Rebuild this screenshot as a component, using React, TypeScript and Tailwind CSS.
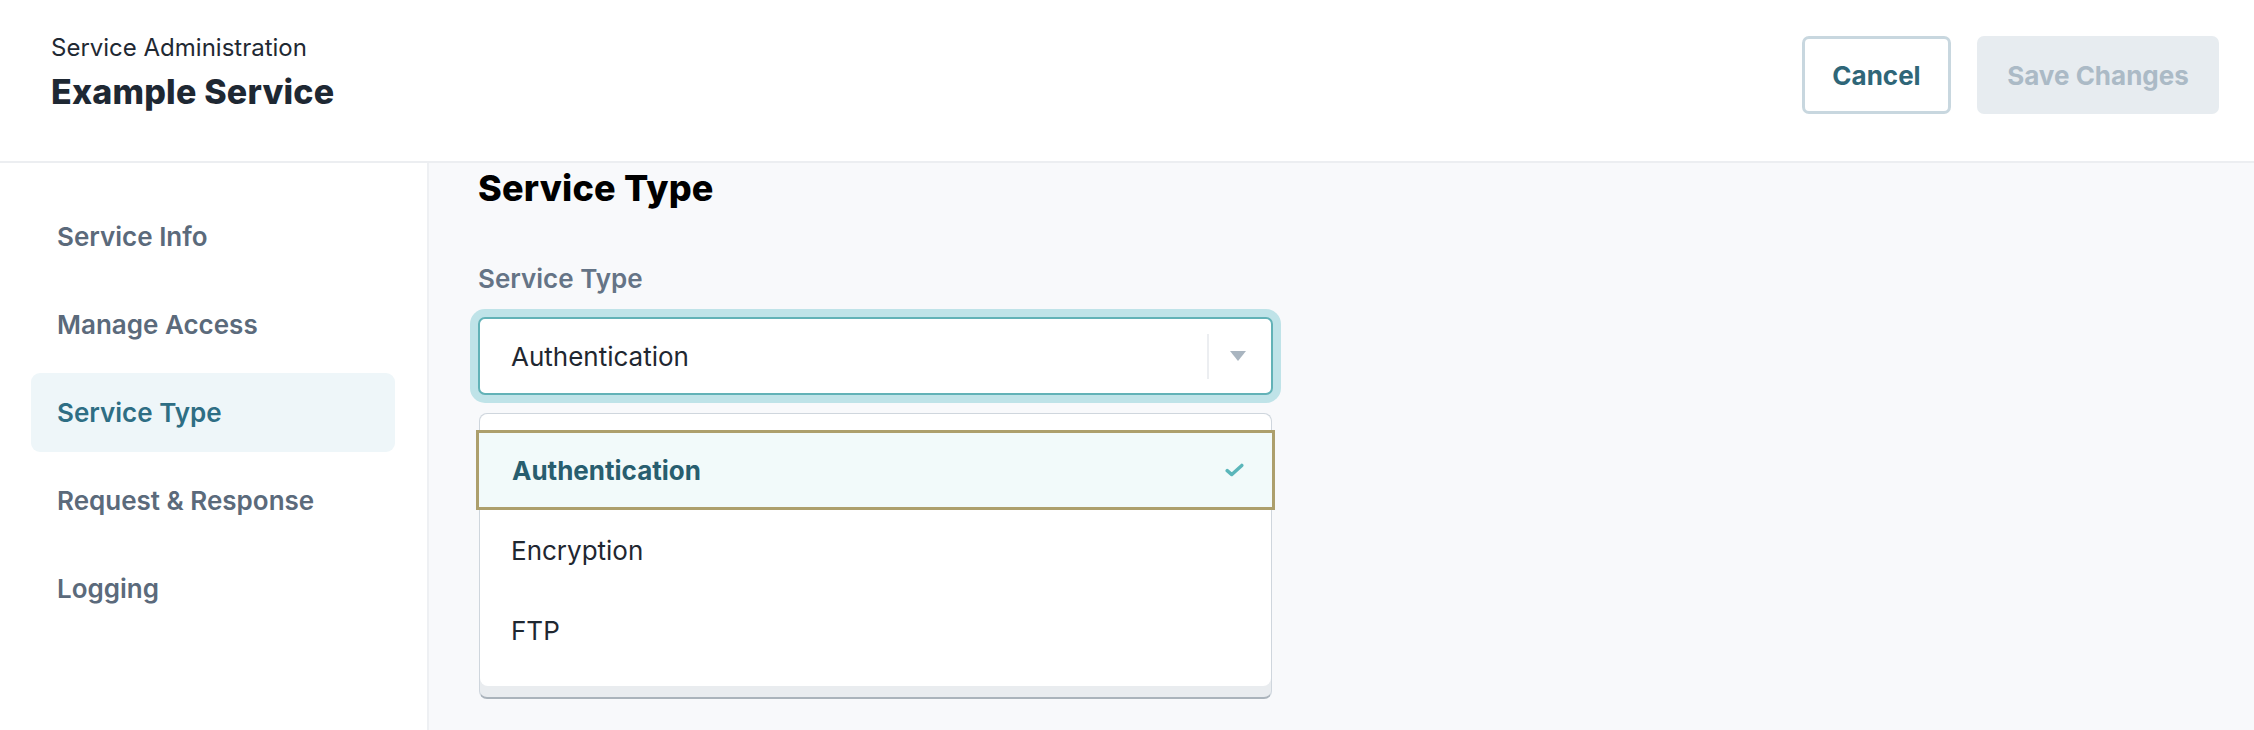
import { useState } from "react";

const navItems = [
  "Service Info",
  "Manage Access",
  "Service Type",
  "Request & Response",
  "Logging",
];

const options = ["Authentication", "Encryption", "FTP"];

function IconCaret() {
  return (
    <svg className="h-[10px] w-[16px]" viewBox="0 0 16 10" aria-hidden>
      <path d="M0 0h16L8 10Z" fill="#a9b5c0" />
    </svg>
  );
}

function IconCheck() {
  return (
    <svg className="h-[14px] w-[19px]" viewBox="0 0 19 14" fill="none" aria-hidden>
      <path
        d="M2.2 7.6 6.8 11.6 16.8 2.4"
        stroke="#5bb6ba"
        strokeWidth="3.4"
        strokeLinecap="round"
        strokeLinejoin="round"
      />
    </svg>
  );
}

export default function App() {
  const [active] = useState("Service Type");
  const [value] = useState("Authentication");

  return (
    <div className="flex h-[730px] w-[2254px] flex-col overflow-hidden bg-white font-['Inter',sans-serif] text-[#1f2937]">
      <header className="flex h-[163px] shrink-0 items-center justify-between border-b-2 border-[#eceef1] pl-[51px] pr-[35px]">
        <div className="flex flex-col pb-[15px]">
          <p className="text-[24px] leading-[32px] text-[#1f2933]">Service Administration</p>
          <h1 className="mt-[6px] text-[34px] font-extrabold leading-[44px] tracking-[0.2px] text-[#1e2833]">
            Example Service
          </h1>
        </div>
        <div className="flex items-center gap-[26px] pb-[11px]">
          <button className="h-[78px] w-[149px] rounded-[7px] border-[3px] border-[#c8d7df] bg-white text-[26px] font-bold text-[#2f6678]">
            Cancel
          </button>
          <button className="h-[78px] w-[242px] rounded-[7px] bg-[#e7ecf0] text-[26px] font-bold text-[#abbac6]">
            Save Changes
          </button>
        </div>
      </header>

      <div className="flex min-h-0 flex-1">
        <aside className="flex w-[429px] shrink-0 flex-col gap-[9px] border-r-2 border-[#eef0f3] pl-[31px] pr-[32px] pt-[34px]">
          {navItems.map((item) => (
            <div
              key={item}
              className={
                item === active
                  ? "flex h-[79px] items-center rounded-[9px] bg-[#eef6f9] pl-[26px] text-[26px] font-semibold text-[#2e6e84]"
                  : "flex h-[79px] items-center rounded-[9px] pl-[26px] text-[26px] font-semibold text-[#5b6a7b]"
              }
            >
              {item}
            </div>
          ))}
        </aside>

        <main className="flex-1 bg-[#f8f9fb] pl-[49px] pt-[3px]">
          <h2 className="text-[36px] font-extrabold leading-[44px] tracking-[0.2px] text-black">Service Type</h2>
          <p className="mt-[53px] text-[26px] font-semibold leading-[32px] text-[#657486]">Service Type</p>

          <div className="relative mt-[22px] w-[795px]">
            <div className="flex h-[78px] items-center rounded-[7px] border-2 border-[#62b2b7] bg-white pl-[31px] pr-[25px] shadow-[0_0_0_8px_#bfe3e8]">
              <span className="flex-1 text-[26px] text-[#1f2731]">{value}</span>
              <span className="h-[45px] w-[2px] bg-[#eceef1]" />
              <span className="flex w-[37px] justify-end">
                <IconCaret />
              </span>
            </div>

            <div className="absolute left-[1px] right-[1px] top-[96px] rounded-[8px] border border-b-2 border-[#cfd6dd] border-b-[#aab3bb] bg-[#e9ecef] pb-[11px]">
              <div className="rounded-[8px] bg-white pb-[16px] pt-[16px]">
                {options.map((opt) =>
                  opt === value ? (
                    <div
                      key={opt}
                      className="-mx-[4px] flex h-[80px] items-center justify-between border-[3px] border-[#ad9f6c] bg-[#f2fafa] pl-[33px] pr-[28px] text-[26px] font-bold text-[#285e6f]"
                    >
                      {opt}
                      <IconCheck />
                    </div>
                  ) : (
                    <div
                      key={opt}
                      className="flex h-[80px] items-center pl-[31px] text-[26px] text-[#1f2731]"
                    >
                      {opt}
                    </div>
                  )
                )}
              </div>
            </div>
          </div>
        </main>
      </div>
    </div>
  );
}
